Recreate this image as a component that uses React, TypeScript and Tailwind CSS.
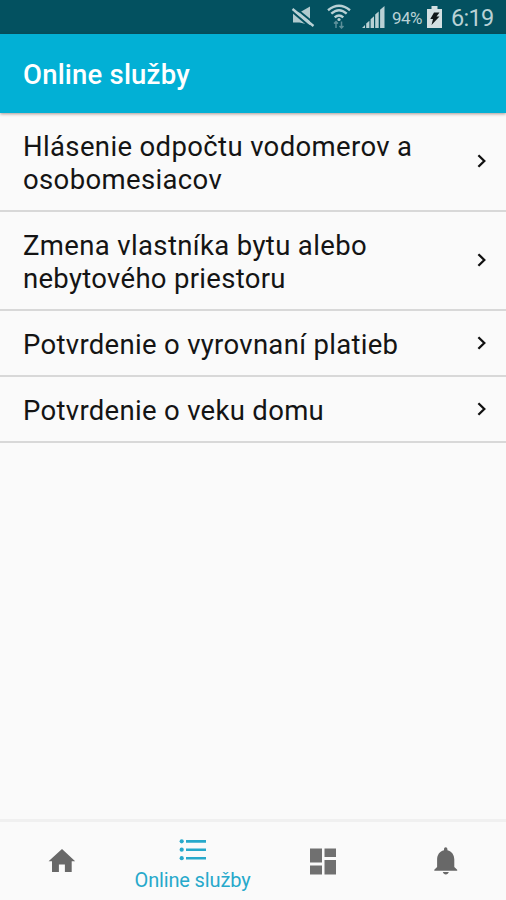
const services = [
  { lines: ['Hlásenie odpočtu vodomerov a', 'osobomesiacov'], spacing: ['tracking-[0.36px]', 'tracking-[0.36px]'] },
  { lines: ['Zmena vlastníka bytu alebo', 'nebytového priestoru'], spacing: ['tracking-[0.36px]', 'tracking-[0.3px]'] },
  { lines: ['Potvrdenie o vyrovnaní platieb'], spacing: ['tracking-[0.31px]'] },
  { lines: ['Potvrdenie o veku domu'], spacing: ['tracking-[0.31px]'] },
];

function MutedIcon() {
  return (
    <svg width="24" height="24" viewBox="0 0 24 24" className="block">
      <path d="M2 7.500h6.500L19 1.500v18.500L8.500 17.500H2z" fill="#b0cace" />
      <path d="M2.500 1.500L24 19" stroke="#035160" strokeWidth="2" />
      <path d="M.5 6L21 23.500" stroke="#035160" strokeWidth="2" />
      <path d="M1.500 4L22.500 21" stroke="#b9d1d5" strokeWidth="2.4" />
    </svg>
  );
}

function WifiIcon() {
  return (
    <svg width="26" height="26" viewBox="0 0 26 26" fill="none" className="block">
      <g stroke="#b9d1d5" strokeWidth="2.4">
        <path d="M2 7.200Q13 -1.800 24 7.200" />
        <path d="M5.300 10.700Q13 3.700 20.700 10.700" />
        <path d="M8.700 14.300Q13 10.500 17.300 14.300" />
      </g>
      <circle cx="13" cy="16.500" r="1.600" fill="#b9d1d5" />
      <path d="M10 25v-6.500M8 20.500l2-2 2 2M15.500 18.500V25M13.500 23l2 2 2-2" stroke="#5b8f99" strokeWidth="1.5" />
    </svg>
  );
}

function SignalIcon() {
  return (
    <svg width="23" height="22" viewBox="0 0 23 22" fill="#b9d1d5" className="block">
      <path d="M0 22l3-3v3zM4.200 22v-4.500l3.200-2.800V22zM8.600 22v-8.800l3.400-3V22zM13.200 22V8.600l3.500-3V22zM18.100 22V3.800L22.500 0v22z" />
    </svg>
  );
}

function BatteryIcon() {
  return (
    <svg width="15" height="22" viewBox="0 0 15 22" className="block">
      <path d="M4.500 0h6v3H15v19H0V3h4.500z" fill="#d3e0e2" />
      <path d="M7 6.500h5.500L9.500 10.500h3L4.500 19l1.500-6H3.300z" fill="#101819" />
    </svg>
  );
}

function Chevron() {
  return (
    <svg width="10" height="14" viewBox="0 0 10 14" fill="none" className="block">
      <path d="M1.400 1.200L7.300 7l-5.900 5.800" stroke="#111" strokeWidth="2.300" />
    </svg>
  );
}

export default function App() {
  return (
    <div className="flex h-[900px] w-[506px] flex-col overflow-hidden bg-[#fafafa] font-['Roboto',sans-serif]">
      <div className="flex h-[34px] shrink-0 bg-[#035160] text-[#b9d1d5]">
        <div className="ml-[291px] mt-[5px]"><MutedIcon /></div>
        <div className="ml-[11px] mt-[3px]"><WifiIcon /></div>
        <div className="ml-[10px] mt-[6px]"><SignalIcon /></div>
        <div className="ml-[7px] mt-[8px] w-[32px] whitespace-nowrap text-[17px] leading-5 tracking-[-0.5px]">94%</div>
        <div className="ml-[3px] mt-[6px]"><BatteryIcon /></div>
        <div className="ml-[9px] mt-[5px] whitespace-nowrap text-[23.5px] leading-[26px] tracking-[-0.7px]">6:19</div>
      </div>
      <header className="z-10 flex h-[79px] shrink-0 items-center bg-[#02b0d5] pl-[23px] pt-[3px] shadow-[0_1px_3px_rgba(70,30,20,0.45)]">
        <h1 className="whitespace-nowrap text-[27.5px] font-medium leading-8 tracking-[0.2px] text-white">Online služby</h1>
      </header>
      <main className="flex-1">
        {services.map((s) => (
          <div
            key={s.lines[0]}
            className={`flex justify-between border-b-2 border-[#d8d8d8] pl-[23px] pr-[19px] ${s.lines.length > 1 ? 'h-[99px]' : 'h-[66px]'}`}
          >
            <div className="pt-[17px] text-[27.5px] leading-[33px] text-[#141414]">
              {s.lines.map((l, i) => (
                <div key={l} className={`whitespace-nowrap ${s.spacing[i]}`}>{l}</div>
              ))}
            </div>
            <div className={s.lines.length > 1 ? 'pt-[41px]' : 'pt-[25px]'}><Chevron /></div>
          </div>
        ))}
      </main>
      <nav className="flex h-[81px] shrink-0 border-t-[3px] border-[#f0f0f0]">
        <div className="ml-[48px] mt-[26px] w-[28px]">
          <svg width="28" height="26" viewBox="0 0 28 26" className="block">
            <path d="M14 1L27.200 13.200H23.700V24H16.900V16.500H10.900V24H4V13.200H.6z" fill="#686868" />
          </svg>
        </div>
        <div className="ml-[58px] flex w-[117px] flex-col items-center pt-[16px] text-[#27a9cb]">
          <svg width="28" height="23" viewBox="0 0 28 23" fill="#27a9cb" className="block">
            <circle cx="2.700" cy="3.300" r="2.100" />
            <circle cx="2.700" cy="11.700" r="2.100" />
            <circle cx="2.700" cy="20.200" r="2.100" />
            <path d="M7 2h20v2.700H7zM7 10.400h20v2.700H7zM7 18.900h20v2.700H7z" />
          </svg>
          <div className="mt-[7px] whitespace-nowrap text-[20px] leading-6 tracking-[-0.15px]">Online služby</div>
        </div>
        <div className="ml-[59px] mt-[26px] w-[26px]">
          <svg width="26" height="27" viewBox="0 0 26 27" fill="#707070" className="block">
            <path d="M0 .5h12v14H0zM14.500.5H26V9H14.500zM0 17.500h12v9H0zM14.500 12H26v14.500H14.500z" />
          </svg>
        </div>
        <div className="ml-[98px] mt-[25px]">
          <svg width="24" height="28" viewBox="0 0 24 28" fill="#686868" className="block">
            <path d="M10 3.200V2a1.700 1.700 0 013.400 0v1.200c4.500 1.100 6.900 4.700 6.900 9.400v7.500l2.900 2.700v1H.3v-1l2.800-2.700v-7.500C3.100 7.900 5.500 4.300 10 3.200z" />
            <path d="M8.800 25h6c-.5 1.600-1.500 2.500-3 2.500s-2.500-.9-3-2.500z" />
          </svg>
        </div>
      </nav>
    </div>
  );
}
